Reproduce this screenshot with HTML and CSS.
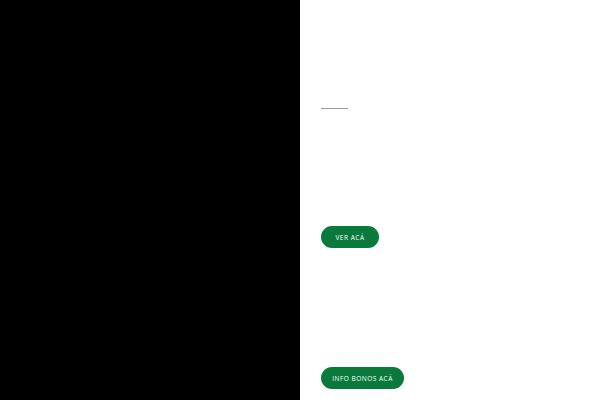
FILE: index.html
```html
<!DOCTYPE html>
<html lang="es">
<head>
<meta charset="utf-8">
<link rel="stylesheet" href="styles.css">
</head>
<body>
<div class="page">
  <div class="media"></div>
  <div class="content">
    <div class="rule"></div>
    <a class="btn btn-first" href="#">VER ACÁ</a>
    <a class="btn btn-second" href="#">INFO BONOS ACÁ</a>
  </div>
</div>
</body>
</html>
```
FILE: styles.css
```css
html, body { margin: 0; padding: 0; }
body { font-family: "Open Sans", "Liberation Sans", sans-serif; background: #fff; }
.page { display: flex; width: 600px; height: 400px; overflow: hidden; }
.media { width: 300px; height: 400px; background: #000; flex: none; }
.content { flex: 1; display: flex; flex-direction: column; align-items: flex-start; padding-left: 21px; }
.rule { width: 27px; height: 1px; background: #9a9a9a; margin-top: 108px; }
.btn {
  display: inline-flex; align-items: center; justify-content: center;
  height: 22px; border-radius: 11px; background: #097a3c; color: #fff;
  text-decoration: none; font-size: 6.5px; letter-spacing: 0.5px; font-weight: 400;
}
.btn-first { width: 58px; margin-top: 117px; }
.btn-second { width: 83px; margin-top: 119px; }
```
